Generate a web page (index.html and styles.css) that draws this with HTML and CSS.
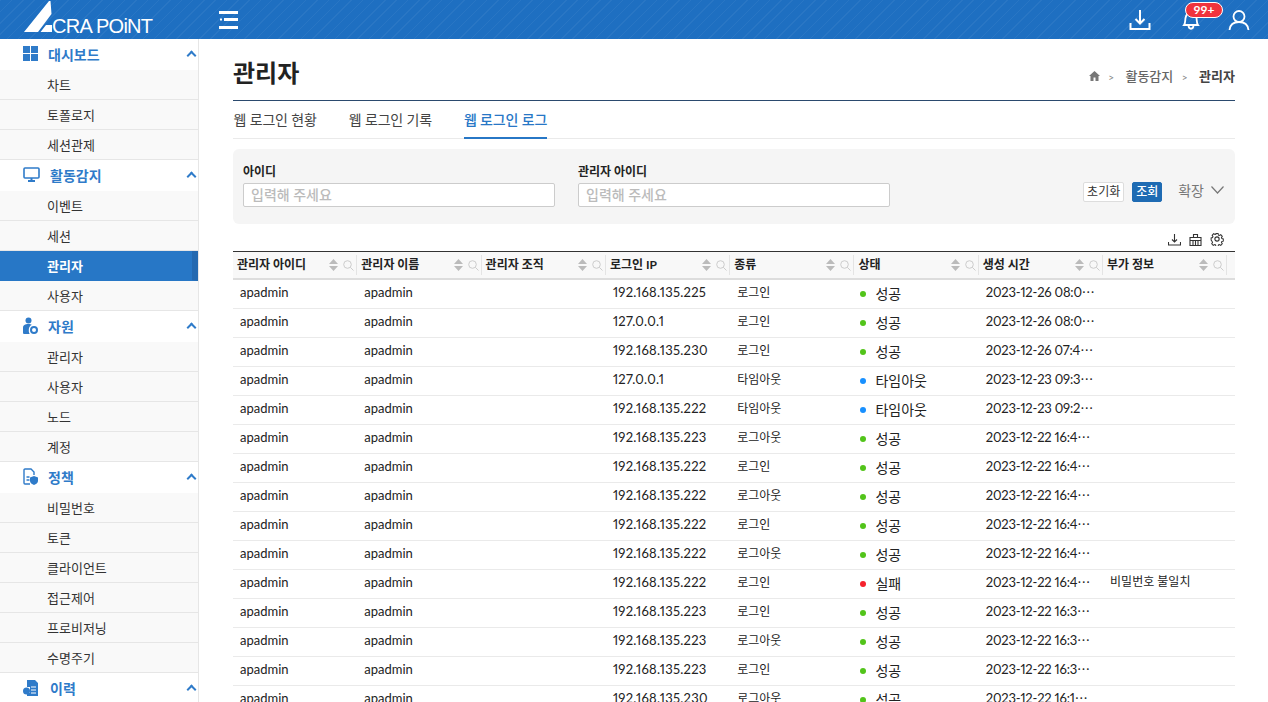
FILE: index.html
```html
<!DOCTYPE html>
<html lang="ko">
<head>
<meta charset="UTF-8">
<title>관리자</title>
<link rel="stylesheet" href="styles.css">
</head>
<body>

<header class="topbar">
  <div class="logo">
    <svg class="logo-mark" width="60" height="39" viewBox="0 0 60 39"><path fill="#fff" d="M0 32 L25 1 L26.500 1 L27.500 14 L14 32 Z M16.500 32 L22 25 L28 25 L28 32 Z"/></svg>
    <span class="logo-text">CRA POiNT</span>
  </div>
  <svg class="menu-btn" width="19" height="18" viewBox="0 0 19 18"><path fill="#fff" d="M0 0h19v3H0z M5 7h14v3H5z M0 15h19v3H0z M1 7.500h2v2H1z"/></svg>
  <div class="top-actions">
    <svg width="22" height="22" viewBox="0 0 22 22" fill="none" stroke="#fff" stroke-width="2"><path d="M11 1v13M6.500 10l4.500 4.500 4.500-4.500M1.500 14v6h19v-6"/></svg>
    <div class="bell">
      <svg width="18" height="20" viewBox="0 0 18 20" fill="none" stroke="#fff" stroke-width="1.800"><path d="M2 15c1.500-2 1-4 1.500-7C4 5 6 3 9 3s5 2 5.500 5c.5 3 0 5 1.500 7zM6.500 15c0 5 5 5 5 0"/></svg>
      <span class="badge">99+</span>
    </div>
    <svg width="22" height="22" viewBox="0 0 22 22" fill="none" stroke="#fff" stroke-width="1.800"><circle cx="11" cy="7.500" r="5.500"/><path d="M1.500 21c.5-5 4-8 9.500-8s9 3 9.500 8"/></svg>
  </div>
</header>

<div class="layout">
  <nav class="sidebar">
    <a class="nav-group">
      <svg class="nav-icon" width="15" height="15" viewBox="0 0 15 15" fill="#2f7bc9"><path d="M0 0h7v7H0zM8 0h7v7H8zM0 8h7v7H0zM8 8h7v7H8z"/></svg>
      <span>대시보드</span><i class="chev"></i>
    </a>
    <a class="nav-item">차트</a>
    <a class="nav-item">토폴로지</a>
    <a class="nav-item">세션관제</a>
    <a class="nav-group">
      <svg class="nav-icon" width="17" height="15" viewBox="0 0 17 15" fill="none" stroke="#2f7bc9" stroke-width="1.600"><rect x="1" y="1" width="15" height="10" rx="1"/><path d="M8.500 11v3M5 14h7" stroke-width="2"/></svg>
      <span>활동감지</span><i class="chev"></i>
    </a>
    <a class="nav-item">이벤트</a>
    <a class="nav-item">세션</a>
    <a class="nav-item active">관리자</a>
    <a class="nav-item">사용자</a>
    <a class="nav-group">
      <svg class="nav-icon" width="15" height="18" viewBox="0 0 15 18" fill="#2f7bc9"><circle cx="5.500" cy="3.500" r="3"/><path d="M0 11c0-3 2-4 5.500-4 1.500 0 2.500.3 3.300.8C6.500 9 5.500 11 5.800 14.500c.1.800.4 1.600.9 2.500H1.500C.500 17 0 16.500 0 15.500z"/><circle cx="11" cy="13" r="3" fill="none" stroke="#2f7bc9" stroke-width="2"/></svg>
      <span>자원</span><i class="chev"></i>
    </a>
    <a class="nav-item">관리자</a>
    <a class="nav-item">사용자</a>
    <a class="nav-item">노드</a>
    <a class="nav-item">계정</a>
    <a class="nav-group">
      <svg class="nav-icon" width="15" height="17" viewBox="0 0 15 17" fill="none" stroke="#2f7bc9" stroke-width="1.400"><path d="M7 16H2a1 1 0 0 1-1-1V2a1 1 0 0 1 1-1h6l3 3v3M3.500 9h3M3.500 12h3"/><path fill="#2f7bc9" stroke="none" d="M11 8l4 1.500V13c0 2-2 3.300-4 4-2-.7-4-2-4-4V9.500z"/></svg>
      <span>정책</span><i class="chev"></i>
    </a>
    <a class="nav-item">비밀번호</a>
    <a class="nav-item">토큰</a>
    <a class="nav-item">클라이언트</a>
    <a class="nav-item">접근제어</a>
    <a class="nav-item">프로비저닝</a>
    <a class="nav-item">수명주기</a>
    <a class="nav-group">
      <svg class="nav-icon wide" width="16" height="16" viewBox="0 0 16 16" fill="#2f7bc9"><path d="M4 0h8l3 3v13H4v-3h3V7H4z"/><circle cx="3.500" cy="11" r="3.500"/><path d="M8 7h5M8 10h5M8 13h5" stroke="#fff"/></svg>
      <span>이력</span><i class="chev"></i>
    </a>
  </nav>

  <main class="content">
    <div class="page-head">
      <h1>관리자</h1>
      <div class="crumbs">
        <svg width="11" height="10" viewBox="0 0 11 10" fill="#777"><path d="M5.500 0L11 5H9.500v5H6.500V6.500h-2V10H1.500V5H0z"/></svg>
        <span class="sep">&gt;</span>
        <span>활동감지</span>
        <span class="sep">&gt;</span>
        <b>관리자</b>
      </div>
    </div>

    <div class="tabs">
      <a class="tab">웹 로그인 현황</a>
      <a class="tab">웹 로그인 기록</a>
      <a class="tab on">웹 로그인 로그</a>
    </div>

    <div class="filter">
      <div class="field">
        <label>아이디</label>
        <input type="text" placeholder="입력해 주세요">
      </div>
      <div class="field">
        <label>관리자 아이디</label>
        <input type="text" placeholder="입력해 주세요">
      </div>
      <div class="filter-btns">
        <button class="btn">초기화</button>
        <button class="btn primary">조회</button>
        <span class="expand">확장 <svg width="13" height="8" viewBox="0 0 13 8" fill="none" stroke="#777" stroke-width="1.200"><path d="M.5.500l6 6.500 6-6.500"/></svg></span>
      </div>
    </div>

    <div class="tools">
      <svg width="13" height="13" viewBox="0 0 13 13" fill="none" stroke="#333" stroke-width="1.100"><path d="M6.500 1v8M4 6.500L6.500 9 9 6.500M.5 9v3h12V9"/></svg>
      <svg width="13" height="13" viewBox="0 0 13 13" fill="none" stroke="#333" stroke-width="1.100"><path d="M4.500 4V1.500h4V4M1 4.500h11v8H1zM1 7.500h11M4 7.500v5M6.500 7.500v5M9 7.500v5"/></svg>
      <svg width="14" height="14" viewBox="0 0 15 15" fill="none" stroke="#333" stroke-width="1.200"><circle cx="7.500" cy="7.500" r="2.300"/><path d="M6.200 1h2.600l.4 1.900 1.100.5 1.700-1 1.800 1.900-1 1.600.5 1.100 1.700.5v2.600l-1.700.4-.5 1.100 1 1.600-1.800 1.900-1.700-1-1.100.5-.4 1.900H6.200l-.4-1.900-1.100-.5-1.700 1-1.800-1.900 1-1.600-.5-1.100L.5 8.900V6.300l1.700-.5.5-1.100-1-1.600 1.800-1.900 1.700 1 1.100-.5z" transform="translate(0.750 0.750) scale(0.9)"/></svg>
    </div>

    <div class="grid" id="grid"></div>
  </main>
</div>

<script src="app.js"></script>
</body>
</html>
```

FILE: styles.css
```css
* {
  box-sizing: border-box;
}
html, body {
  height: 100%;
}
body {
  margin: 0;
  overflow: hidden;
  background-color: #fff;
  color: #222;
  font-family: Lato, "Noto Sans CJK KR", sans-serif;
  font-size: 13px;
}
.topbar {
  display: flex;
  align-items: center;
  height: 39px;
  padding-right: 18px;
  background-color: #1e6fc1;
  background-image: repeating-linear-gradient(135deg, rgba(255,255,255,0.05) 0 1px, transparent 1px 8px);
}
.logo {
  display: flex;
  align-items: flex-end;
  width: 219px;
  height: 39px;
  padding-bottom: 3px;
  padding-left: 24px;
  color: #fff;
}
.logo-mark {
  flex: none;
  align-self: flex-start;
  margin-right: -32px;
}
.logo-text {
  font-family: "Liberation Sans", sans-serif;
  font-size: 20px;
  line-height: 20px;
  letter-spacing: -0.7px;
  white-space: nowrap;
}
.top-actions {
  display: flex;
  align-items: center;
  gap: 27px;
  margin-left: auto;
}
.bell {
  position: relative;
  height: 20px;
  margin-left: 4px;
  margin-right: 1px;
}
.badge {
  position: absolute;
  top: -8px;
  left: 3px;
  width: 38px;
  height: 16px;
  border-radius: 8px;
  border: 1px solid #fff;
  background-color: #f0333d;
  color: #fff;
  font-size: 12px;
  font-weight: 700;
  line-height: 14px;
  text-align: center;
}
.layout {
  display: flex;
  height: 663px;
}
.sidebar {
  flex: none;
  width: 199px;
  height: 663px;
  overflow: hidden;
  border-right: 1px solid #e6e6e6;
}
.nav-group {
  display: flex;
  align-items: center;
  height: 31px;
  padding-right: 3px;
  padding-bottom: 2px;
  padding-left: 23px;
  color: #2f7bc9;
  font-size: 14px;
  font-weight: 700;
}
.nav-icon {
  flex: none;
  margin-right: 10px;
}
.nav-icon.wide {
  margin-right: 11px;
}
.chev {
  width: 7px;
  height: 7px;
  margin-top: 4px;
  margin-left: auto;
  border-top: 2px solid #2f7bc9;
  border-left: 2px solid #2f7bc9;
  transform: rotate(45deg);
}
.nav-item {
  display: block;
  height: 30px;
  padding-left: 47px;
  border-bottom: 1px solid #e6e6e6;
  background-color: #f9f9f9;
  color: #333;
  font-size: 13px;
  line-height: 30px;
}
.nav-item.active {
  border-bottom-color: #2777c6;
  border-right: 6px solid #2469b0;
  background-color: #2777c6;
  color: #fff;
  font-weight: 700;
}
.content {
  flex: 1;
  min-width: 0;
  padding-right: 33px;
  padding-left: 34px;
}
.page-head {
  display: flex;
  align-items: center;
  justify-content: space-between;
  height: 62px;
  padding-top: 4px;
  border-bottom: 1px solid #2b4a6e;
}
h1 {
  margin: 0;
  font-size: 24px;
  font-weight: 700;
  color: #222;
}
.crumbs {
  display: flex;
  align-items: center;
  gap: 8.5px;
  padding-top: 8px;
  color: #666;
  font-size: 13px;
  font-weight: 500;
}
.crumbs b {
  color: #444;
}
.sep {
  margin: 2px 3px 0 0;
  color: #888;
  font-size: 10px;
}
.tabs {
  display: flex;
  gap: 32px;
  height: 38px;
  padding-left: 0.5px;
  border-bottom: 1px solid #eaeaea;
}
.tab {
  height: 38px;
  padding-top: 9px;
  color: #444;
  font-size: 14px;
  line-height: 20px;
  letter-spacing: -0.15px;
}
.tab.on {
  border-bottom: 2px solid #2777c6;
  color: #2777c6;
  font-weight: 500;
}
.filter {
  display: flex;
  align-items: center;
  height: 75px;
  margin-top: 10px;
  padding: 0 11px 4px 10px;
  border-radius: 6px;
  background-color: #f5f5f5;
}
.field {
  width: 311.5px;
  margin-right: 23.5px;
}
.field label {
  display: block;
  margin-bottom: 2px;
  font-size: 12px;
  font-weight: 700;
  line-height: 18px;
}
.field input {
  display: block;
  width: 100%;
  height: 24px;
  padding: 0 7px;
  border: 1px solid #ccc;
  border-radius: 2px;
  background-color: #fff;
  font-family: inherit;
  font-size: 14px;
  font-weight: 500;
}
.field input::placeholder {
  color: #bbb;
}
.filter-btns {
  display: flex;
  align-items: center;
  margin-left: auto;
  margin-top: 14px;
}
.btn {
  height: 20px;
  margin-right: 8px;
  padding: 0 3px;
  border: 1px solid #ddd;
  border-radius: 2px;
  background-color: #fff;
  color: #333;
  font-family: inherit;
  font-size: 12px;
  line-height: 18px;
}
.btn.primary {
  width: 30px;
  padding: 0;
  border-color: #1e6bb3;
  background-color: #1e6bb3;
  color: #fff;
  font-weight: 500;
}
.expand {
  display: flex;
  align-items: center;
  gap: 7px;
  margin-left: 8px;
  margin-top: -3px;
  color: #777;
  font-size: 14px;
}
.tools {
  display: flex;
  align-items: center;
  justify-content: flex-end;
  gap: 8px;
  height: 27px;
  padding-right: 11px;
  padding-top: 3px;
}
.grid {
  border-top: 1px solid #333;
}
.row {
  display: flex;
  height: 29px;
  border-bottom: 1px solid #eaeaea;
  font-size: 13px;
  font-variant-numeric: proportional-nums;
  line-height: 24px;
}
.row.head {
  height: 28px;
  border-bottom: 2px solid #ddd;
  background-color: #f8f8f8;
  font-weight: 700;
  font-size: 12px;
}
.cell {
  flex: none;
  width: 124.3px;
  padding-left: 7px;
  white-space: nowrap;
}
.row.head .cell {
  display: flex;
  align-items: center;
  height: 20px;
  margin-top: 3px;
  padding-right: 2px;
  padding-left: 4px;
  border-right: 1px solid #e4e4e4;
  line-height: 20px;
}
.sort {
  width: 9px;
  margin-left: auto;
  margin-right: 5px;
  flex: none;
}
.find {
  flex: none;
}
.cell.ip {
  letter-spacing: 0.27px;
}
.cell.kind {
  padding-top: 1px;
  font-size: 12px;
}
.cell.state {
  padding-top: 2px;
  padding-left: 6px;
  font-size: 14px;
}
.cell.time {
  letter-spacing: -0.2px;
}
.dot {
  display: inline-block;
  width: 6px;
  height: 6px;
  margin-right: 9px;
  border-radius: 50%;
  vertical-align: 2px;
}
.dot.ok { background-color: #52c41a; }
.dot.out { background-color: #1890ff; }
.dot.fail { background-color: #f5222d; }
.cell.extra {
  font-size: 12px;
}
```

FILE: app.js
```js
var heads = ["관리자 아이디", "관리자 이름", "관리자 조직", "로그인 IP", "종류", "상태", "생성 시간", "부가 정보"];

var rows = [
  ["192.168.135.225", "로그인", "ok", "성공", "2023-12-26 08:0⋯", ""],
  ["127.0.0.1", "로그인", "ok", "성공", "2023-12-26 08:0⋯", ""],
  ["192.168.135.230", "로그인", "ok", "성공", "2023-12-26 07:4⋯", ""],
  ["127.0.0.1", "타임아웃", "out", "타임아웃", "2023-12-23 09:3⋯", ""],
  ["192.168.135.222", "타임아웃", "out", "타임아웃", "2023-12-23 09:2⋯", ""],
  ["192.168.135.223", "로그아웃", "ok", "성공", "2023-12-22 16:4⋯", ""],
  ["192.168.135.222", "로그인", "ok", "성공", "2023-12-22 16:4⋯", ""],
  ["192.168.135.222", "로그아웃", "ok", "성공", "2023-12-22 16:4⋯", ""],
  ["192.168.135.222", "로그인", "ok", "성공", "2023-12-22 16:4⋯", ""],
  ["192.168.135.222", "로그아웃", "ok", "성공", "2023-12-22 16:4⋯", ""],
  ["192.168.135.222", "로그인", "fail", "실패", "2023-12-22 16:4⋯", "비밀번호 불일치"],
  ["192.168.135.223", "로그인", "ok", "성공", "2023-12-22 16:3⋯", ""],
  ["192.168.135.223", "로그아웃", "ok", "성공", "2023-12-22 16:3⋯", ""],
  ["192.168.135.223", "로그인", "ok", "성공", "2023-12-22 16:3⋯", ""],
  ["192.168.135.230", "로그아웃", "ok", "성공", "2023-12-22 16:1⋯", ""]
];

var sortIcon = '<svg class="sort" width="9" height="12" viewBox="0 0 9 12" fill="#bbb"><path d="M4.500 0L9 5H0zM0 7h9l-4.500 5z"/></svg>';
var findIcon = '<svg class="find" width="11" height="11" viewBox="0 0 11 11" fill="none" stroke="#ccc" stroke-width="1"><circle cx="4.500" cy="4.500" r="3.800"/><path d="M7.300 7.300L10.500 10.500"/></svg>';

var html = '<div class="row head">';
heads.forEach(function(h) {
  html += '<div class="cell"><span>' + h + '</span>' + sortIcon + findIcon + '</div>';
});
html += '</div>';

rows.forEach(function(r) {
  html += '<div class="row">' +
    '<div class="cell">apadmin</div>' +
    '<div class="cell">apadmin</div>' +
    '<div class="cell"></div>' +
    '<div class="cell ip">' + r[0] + '</div>' +
    '<div class="cell kind">' + r[1] + '</div>' +
    '<div class="cell state"><i class="dot ' + r[2] + '"></i>' + r[3] + '</div>' +
    '<div class="cell time">' + r[4] + '</div>' +
    '<div class="cell extra">' + r[5] + '</div>' +
    '</div>';
});

document.getElementById("grid").innerHTML = html;
```
